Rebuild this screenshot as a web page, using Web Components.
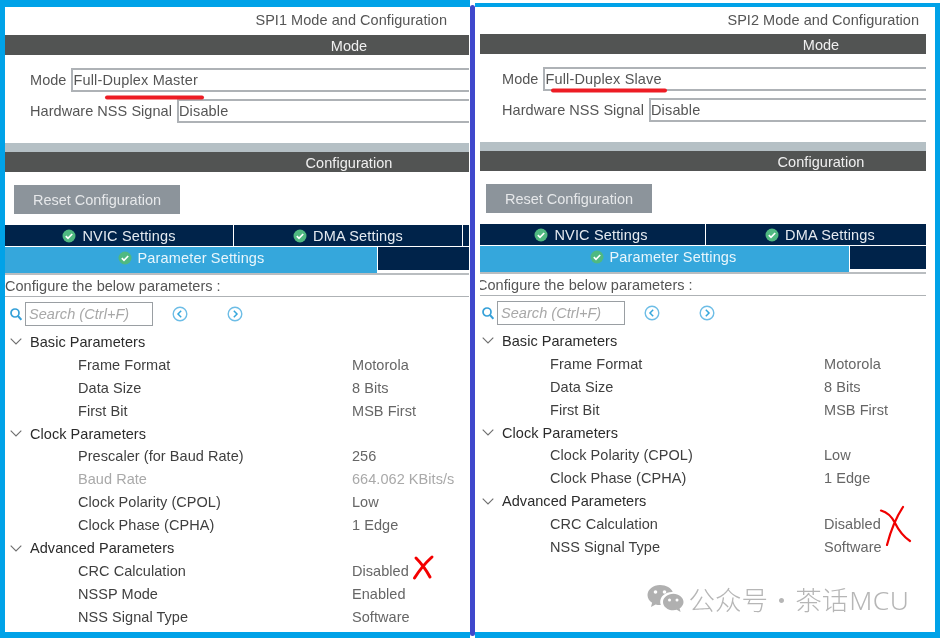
<!DOCTYPE html>
<html lang="en">
<head>
<meta charset="utf-8">
<title>SPI Mode and Configuration</title>
<style>
  html, body { margin: 0; height: 100%; overflow: hidden; background: #fff; }
  body { font-family: "Liberation Sans", Arial, sans-serif; font-size: 14.5px; letter-spacing: .05px; }
</style>
</head>
<body>

<config-sheet>
  <spi-panel side="left" title="SPI1 Mode and Configuration">
    <bar-heading>Mode</bar-heading>
    <field-row style="margin-top:13px" label="Mode">Full-Duplex Master</field-row>
    <field-row style="margin-top:7px" label="Hardware NSS Signal">Disable</field-row>
    <div style="height:9px;margin-top:20px;background:#b5c0c5"></div>
    <bar-heading>Configuration</bar-heading>
    <reset-button>Reset Configuration</reset-button>
    <settings-tabs></settings-tabs>
    <param-search></param-search>
    <param-group label="Basic Parameters">
      <param-row label="Frame Format">Motorola</param-row>
      <param-row label="Data Size">8 Bits</param-row>
      <param-row label="First Bit">MSB First</param-row>
    </param-group>
    <param-group label="Clock Parameters">
      <param-row label="Prescaler (for Baud Rate)">256</param-row>
      <param-row label="Baud Rate" disabled>664.062 KBits/s</param-row>
      <param-row label="Clock Polarity (CPOL)">Low</param-row>
      <param-row label="Clock Phase (CPHA)">1 Edge</param-row>
    </param-group>
    <param-group label="Advanced Parameters">
      <param-row label="CRC Calculation">Disabled</param-row>
      <param-row label="NSSP Mode">Enabled</param-row>
      <param-row label="NSS Signal Type">Software</param-row>
    </param-group>
  </spi-panel>

  <panel-divider></panel-divider>

  <spi-panel side="right" title="SPI2 Mode and Configuration">
    <bar-heading>Mode</bar-heading>
    <field-row style="margin-top:13px" label="Mode">Full-Duplex Slave</field-row>
    <field-row style="margin-top:7px" label="Hardware NSS Signal">Disable</field-row>
    <div style="height:9px;margin-top:20px;background:#b5c0c5"></div>
    <bar-heading>Configuration</bar-heading>
    <reset-button>Reset Configuration</reset-button>
    <settings-tabs></settings-tabs>
    <param-search></param-search>
    <param-group label="Basic Parameters">
      <param-row label="Frame Format">Motorola</param-row>
      <param-row label="Data Size">8 Bits</param-row>
      <param-row label="First Bit">MSB First</param-row>
    </param-group>
    <param-group label="Clock Parameters">
      <param-row label="Clock Polarity (CPOL)">Low</param-row>
      <param-row label="Clock Phase (CPHA)">1 Edge</param-row>
    </param-group>
    <param-group label="Advanced Parameters">
      <param-row label="CRC Calculation">Disabled</param-row>
      <param-row label="NSS Signal Type">Software</param-row>
    </param-group>
  </spi-panel>

  <pen-marks></pen-marks>
  <account-mark></account-mark>
</config-sheet>

<script>
const OK_ICON = `<svg width="14" height="14" viewBox="0 0 14 14"><circle cx="7" cy="7" r="6.5" fill="#4fb981"/><path d="M3.8 7.2l2.2 2.2 4.2-4.4" fill="none" stroke="#fff" stroke-width="1.7"/></svg>`;

// small helper, every element here is just css + markup in an open shadow root
function shadow(el, css, html) {
  el.attachShadow({ mode: 'open' });
  el.shadowRoot.innerHTML = `<style>${css}</style>${html}`;
}

class ConfigSheet extends HTMLElement {
  connectedCallback() {
    shadow(this, `
      :host { display: flex; position: relative; width: 940px; height: 638px; overflow: hidden; background: #fff; filter: blur(.3px); }
    `, `<slot></slot>`);
  }
}

class PanelDivider extends HTMLElement {
  connectedCallback() {
    shadow(this, `
      :host { display: block; flex: none; width: 5px; margin: 5px 0 2px; border-radius: 3px; background: #3f48cc; z-index: 1; }
    `, ``);
  }
}

class SpiPanel extends HTMLElement {
  connectedCallback() {
    const title = this.getAttribute('title');
    shadow(this, `
      :host { display: block; box-sizing: border-box; flex: none; overflow: hidden; }
      :host([side=left]) { width: 470px; border: solid #00a2e8; border-width: 7px 0 6px 5px; padding-right: 1px; }
      :host([side=right]) { width: 465px; margin-top: 3px; height: 635px; border: solid #00a2e8; border-width: 4px 5px 6px 0; padding: 0 9px 0 5px; }
      .view { overflow: hidden; height: 100%; }
      .inner { width: 464px; }
      :host([side=right]) .inner { margin-left: -3px; }
      .title { box-sizing: border-box; height: 28px; padding: 0 0 2px 242px; display: flex; align-items: center; color: #555; }
      :host([side=right]) .title { height: 27px; }
      .title span { width: 200px; text-align: right; white-space: nowrap; }
    `, `<div class="view"><div class="inner"><div class="title"><span>${title}</span></div><slot></slot></div></div>`);
  }
}

class BarHeading extends HTMLElement {
  connectedCallback() {
    shadow(this, `
      :host { display: flex; align-items: center; box-sizing: border-box; height: 20px; background: #525453; color: #f0f0f0; padding: 1px 0 0 244px; }
      span { width: 200px; text-align: center; }
    `, `<span><slot></slot></span>`);
  }
}

class FieldRow extends HTMLElement {
  connectedCallback() {
    shadow(this, `
      :host { display: flex; height: 24px; padding-left: 25px; color: #555; align-items: center; }
      .label { white-space: nowrap; margin-right: 5px; }
      .field { box-sizing: border-box; flex: 1; height: 24px; border: solid #aeb2b6; border-width: 2px 0 2px 2px; line-height: 20px; letter-spacing: .15px; }
    `, `<span class="label">${this.getAttribute('label')}</span><div class="field"><slot></slot></div>`);
  }
}

class ResetButton extends HTMLElement {
  connectedCallback() {
    shadow(this, `
      :host { display: flex; align-items: center; justify-content: center; width: 166px; height: 29px; margin: 13px 0 11px 9px; background: #8c949b; color: #e6e8ea; letter-spacing: 0; }
    `, `<slot></slot>`);
  }
}

class SettingsTabs extends HTMLElement {
  connectedCallback() {
    const tab = (text) => `${OK_ICON}<span>${text}</span>`;
    shadow(this, `
      :host { display: block; color: #e4eaf0; letter-spacing: .16px; }
      .row { display: grid; gap: 1px; background: #fff; }
      .one { grid-template-columns: 228px 228px 1fr; height: 21px; margin-bottom: 1px; }
      .two { grid-template-columns: 372px 1fr; height: 26px; align-items: start; }
      .tab { display: flex; align-items: center; justify-content: center; gap: 6px; height: 100%; background: #00234a; }
      .on { background: #35a7dc; color: #e8f6fc; height: 26px; padding-bottom: 4px; box-sizing: border-box; }
      .rest { height: 23px; }
      .rule { height: 2px; background: #b9bdc0; }
      .hint { box-sizing: border-box; height: 22px; line-height: 23px; color: #555; border-bottom: 1px solid #aeb2b5; letter-spacing: .04px; white-space: nowrap; }
    `, `
      <div class="row one"><div class="tab">${tab('NVIC Settings')}</div><div class="tab">${tab('DMA Settings')}</div><div class="tab"></div></div>
      <div class="row two"><div class="tab on">${tab('Parameter Settings')}</div><div class="tab rest"></div></div>
      <div class="rule"></div>
      <div class="hint">Configure the below parameters :</div>
    `);
  }
}

class ParamSearch extends HTMLElement {
  connectedCallback() {
    const arrow = (d) => `<svg width="16" height="16" viewBox="0 0 16 16"><circle cx="8" cy="8" r="6.8" fill="none" stroke="#6dbde6" stroke-width="1.4"/><path d="${d}" fill="none" stroke="#35a7dc" stroke-width="1.5"/></svg>`;
    shadow(this, `
      :host { display: flex; align-items: center; height: 33.5px; padding: 5px 0 4.5px 5px; box-sizing: border-box; }
      .box { box-sizing: border-box; width: 128px; height: 24px; margin-left: 3px; padding-left: 3px; border: 1px solid #9a9fa3; color: #a8a8a8; font-style: italic; line-height: 22px; white-space: nowrap; overflow: hidden; }
      .prev { margin-left: 19px; } .next { margin-left: 39px; }
      svg { display: block; }
    `, `
      <svg width="12" height="13" viewBox="0 0 12 13"><circle cx="5" cy="5" r="4" fill="none" stroke="#35a0d8" stroke-width="1.7"/><path d="M8 8l3.4 3.8" stroke="#35a0d8" stroke-width="2"/></svg>
      <div class="box">Search (Ctrl+F)</div>
      <span class="prev">${arrow('M9.2 4.8L6 8l3.2 3.2')}</span>
      <span class="next">${arrow('M6.8 4.8L10 8l-3.2 3.2')}</span>
    `);
  }
}

class ParamGroup extends HTMLElement {
  connectedCallback() {
    shadow(this, `
      :host { display: block; }
      .head { display: flex; align-items: center; height: 22.92px; color: #2b2b2b; white-space: nowrap; }
      svg { margin: 0 8px 0 5px; }
    `, `
      <div class="head"><svg width="12" height="7" viewBox="0 0 12 7"><path d="M.7.7L6 6l5.3-5.3" fill="none" stroke="#6e6e6e" stroke-width="1.1"/></svg>${this.getAttribute('label')}</div>
      <slot></slot>
    `);
  }
}

class ParamRow extends HTMLElement {
  connectedCallback() {
    shadow(this, `
      :host { display: grid; grid-template-columns: 274px 1fr; align-items: center; height: 22.92px; padding-left: 73px; color: #3f3f3f; white-space: nowrap; }
      .value { color: #666; }
      :host([disabled]) .name, :host([disabled]) .value { color: #a9a9a9; }
    `, `<span class="name">${this.getAttribute('label')}</span><span class="value"><slot></slot></span>`);
  }
}

// hand drawn red annotations lying over the screenshot
class PenMarks extends HTMLElement {
  connectedCallback() {
    shadow(this, `
      :host { position: absolute; inset: 0; pointer-events: none; z-index: 2; }
      svg { display: block; }
      path { fill: none; stroke-linecap: round; stroke-linejoin: round; }
    `, `
      <svg width="940" height="638" viewBox="0 0 940 638">
        <path d="M107 97.500H202" stroke="#ed1c24" stroke-width="4"/>
        <path d="M553 90.500H665" stroke="#ed1c24" stroke-width="4"/>
        <path d="M416 558q8 8 14 19M432 557q-10 9-17.500 21" stroke="#f40000" stroke-width="3"/>
        <path d="M881 510.500Q890 513 895 523Q901 535 910 541M903 507Q893 522 887 545" stroke="#f00000" stroke-width="2.200"/>
      </svg>
    `);
  }
}

class AccountMark extends HTMLElement {
  connectedCallback() {
    shadow(this, `
      :host { position: absolute; left: 646.5px; top: 583px; display: flex; align-items: center; gap: 5px; height: 32px; color: #b6b6b6; z-index: 2;
        font: 300 26.5px/32px "Noto Sans CJK SC", "Liberation Sans", sans-serif; letter-spacing: 0; word-spacing: -5.5px; white-space: nowrap; }
      .mcu { font-family: "Noto Sans", sans-serif; letter-spacing: .4px; margin-left: 1px; }
      svg { display: block; }
    `, `
      <svg width="37" height="30" viewBox="0 0 37 30">
        <path d="M13 1C6 1 .5 5.500 .5 11c0 3.200 1.800 5.900 4.600 7.800L4 23l4.600-2.500c1.300.4 2.800.6 4.400.6h.8c-.4-1-.6-2-.6-3.100 0-5.500 5.200-9.900 11.700-9.900h.8C24.300 3.900 19.200 1 13 1z" fill="#b0b0b0"/>
        <path d="M36.500 18c0-4.600-4.600-8.300-10.200-8.300S16 13.400 16 18s4.600 8.300 10.300 8.300c1.200 0 2.400-.2 3.500-.5l3.800 2.200-1-3.500c2.300-1.600 3.900-3.900 3.900-6.500z" fill="#b0b0b0"/>
        <circle cx="8.500" cy="8" r="1.800" fill="#fff"/><circle cx="17.500" cy="8" r="1.800" fill="#fff"/>
        <circle cx="22.500" cy="16" r="1.500" fill="#fff"/><circle cx="30" cy="16" r="1.500" fill="#fff"/>
      </svg>
      <span>公众号 · 茶话<span class="mcu">MCU</span></span>
    `);
  }
}

customElements.define('config-sheet', ConfigSheet);
customElements.define('panel-divider', PanelDivider);
customElements.define('spi-panel', SpiPanel);
customElements.define('bar-heading', BarHeading);
customElements.define('field-row', FieldRow);
customElements.define('reset-button', ResetButton);
customElements.define('settings-tabs', SettingsTabs);
customElements.define('param-search', ParamSearch);
customElements.define('param-group', ParamGroup);
customElements.define('param-row', ParamRow);
customElements.define('pen-marks', PenMarks);
customElements.define('account-mark', AccountMark);
</script>
</body>
</html>
